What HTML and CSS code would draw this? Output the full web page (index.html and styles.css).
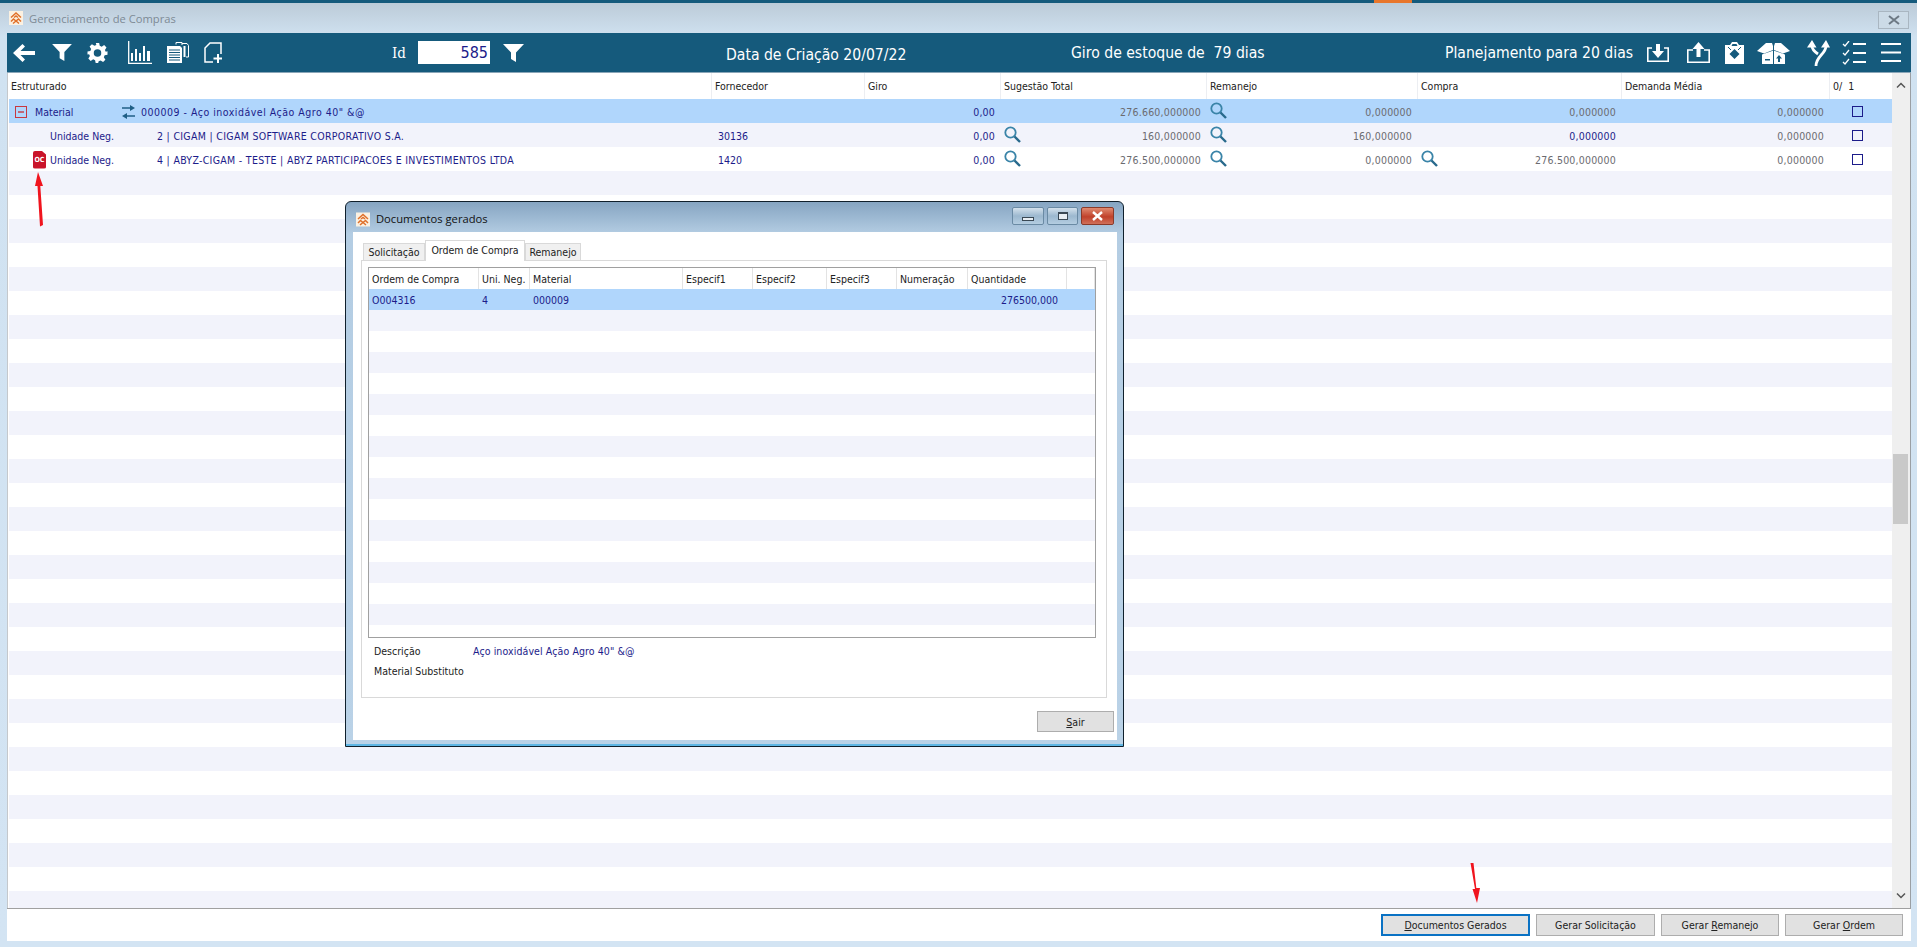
FILE: index.html
```html
<!DOCTYPE html>
<html lang="pt-BR">
<head>
<meta charset="utf-8">
<title>Gerenciamento de Compras</title>
<link rel="stylesheet" href="styles.css">
</head>
<body>
<svg class="defs" width="0" height="0" aria-hidden="true">
  <symbol id="logo" viewBox="0 0 14 14"><rect width="14" height="14" fill="#fbf1e2"/><path d="M2 6.500l5-4.500 5 4.500M2 10.500l2.500-2.500L7 10l2.500-2L12 10.500M4 12.500L7 10l3 2.500M5 6.500L7 5l2 1.500" fill="none" stroke="#e0702a" stroke-width="1.500"/></symbol>
  <symbol id="funnel" viewBox="0 0 21 18"><path d="M0 0h21l-8 8.500V18l-5-3V8.500z" fill="#fff"/></symbol>
  <symbol id="mag" viewBox="0 0 17 17"><circle cx="6.500" cy="6.500" r="5.200" fill="none" stroke="#3a84a8" stroke-width="1.800"/><path d="M10.500 10.500l5.500 5.500" stroke="#28698c" stroke-width="2.400"/></symbol>
</svg>

<div class="topbar"><span class="task-tab"></span></div>

<main class="window">
  <header class="titlebar">
    <svg class="logo"><use href="#logo"/></svg>
    <span class="title-text">Gerenciamento de Compras</span>
    <span class="win-close"><svg width="14" height="10" viewBox="0 0 14 10"><path d="M2 1l10 8M12 1L2 9" stroke="#6d7984" stroke-width="2"/></svg></span>
  </header>

  <div class="toolbar">
    <div class="tool-group tool-left">
      <svg width="22" height="18" viewBox="0 0 22 18"><path d="M9.500 0l2.500 2.500L7.500 7H22v4H7.500l4.500 4.500L9.500 18 0 9z" fill="#fff"/></svg>
      <svg width="20" height="17"><use href="#funnel"/></svg>
      <svg width="21" height="20" viewBox="0 0 24 24"><path fill="#fff" fill-rule="evenodd" d="M10 0h4l.7 3.400 2.300 1 3-1.900 2.800 2.800-1.900 3 1 2.300L24 10v4l-3.400.7-1 2.300 1.900 3-2.800 2.800-3-1.900-2.300 1L12.800 24h-3l-.7-3.400-2.300-1-3 1.900-2.800-2.800 1.900-3-1-2.300L0 13.800v-3.600l3.400-.7 1-2.300-1.900-3 2.800-2.800 3 1.900 2.300-1zM12 7.500a4.500 4.500 0 100 9 4.500 4.500 0 000-9z"/></svg>
      <svg width="24" height="23" viewBox="0 0 24 23"><path fill="none" stroke="#fff" stroke-width="1.300" d="M.7 0v22.300H24"/><path fill="#fff" d="M3 12h2v8H3zM7 8h2v12H7zM11 12h2v8h-2zM15 5h2v15h-2zM19 10h3v10h-3z"/></svg>
      <svg width="22" height="21" viewBox="0 0 22 21"><path fill="none" stroke="#fff" d="M9 2.500V.5h6V3M15 1.500h5l1.500 2V15H19"/><path fill="#fff" d="M0 4h13l2 2v15H0z"/><path stroke="#155a7c" d="M2 8h11M2 10.500h11M2 13h11M2 15.500h11M2 18h11"/><path fill="#fff" d="M16.500 4h2v11h-2z"/></svg>
      <svg width="18" height="21" viewBox="0 0 18 21"><path fill="none" stroke="#fff" stroke-width="1.500" d="M17 12V1H6L1 6v14h8"/><path stroke="#fff" stroke-width="2" d="M14 12v9M9.500 16.500h8.500"/></svg>
    </div>
    <div class="id-box">
      <span class="id-label">Id</span>
      <span class="id-input">585</span>
      <svg width="21" height="18"><use href="#funnel"/></svg>
    </div>
    <span class="tool-text tool-date">Data de Criação 20/07/22</span>
    <span class="tool-text tool-giro">Giro de estoque de &nbsp;79 dias</span>
    <span class="tool-text tool-plan">Planejamento para 20 dias</span>
    <div class="tool-group tool-right">
      <svg width="22" height="18" viewBox="0 0 22 18"><path fill="none" stroke="#fff" stroke-width="1.600" d="M5 4H.8v13.200h20.400V4H17"/><path fill="#fff" d="M9 0h4v7h4l-6 7-6-7h4z"/></svg>
      <svg width="23" height="21" viewBox="0 0 23 21"><path fill="none" stroke="#fff" stroke-width="1.600" d="M6 8H.8v12.200h21.400V8H17"/><path fill="#fff" d="M11.500 0l6 7h-4v8h-4V7h-4z"/></svg>
      <svg width="19" height="22" viewBox="0 0 19 22"><path fill="#fff" d="M0 3h5l2-3h5l2 3h5v19H0z"/><path fill="#155a7c" d="M7.500 2h4l1 2h-6zM9.500 7l5 5-5 5-5-5z"/><path fill="none" stroke="#155a7c" d="M3 5l3 3M16 5l-3 3"/></svg>
      <svg width="33" height="22" viewBox="0 0 33 22"><path fill="#fff" d="M0 9L9 1h6l1 3v4L7 11.500zM33 9l-9-8h-6l-1 3v4l9 3.500zM5 12.500l11.500-4 11.500 4V22H5z"/><path stroke="#155a7c" stroke-width="1" d="M16.500 8v14"/><path fill="#155a7c" d="M8 17h5v1.500H8zM22 13l3 3.500h-2V20h-2v-3.500h-2z"/></svg>
      <svg width="23" height="26" viewBox="0 0 23 26"><path fill="none" stroke="#fff" stroke-width="2.800" d="M9 26c0-10 10-12 10-20M5 6c0 4 3 6 6 8"/><path fill="#fff" d="M0 7.500L5 0l4.500 7.500zM14 7.500L19 0l4 7.500z"/></svg>
      <svg width="24" height="24" viewBox="0 0 24 24"><path stroke="#fff" stroke-width="2.200" d="M11 3h13M11 12h13M11 21h13"/><path fill="none" stroke="#fff" stroke-width="1.300" d="M1 3l2 2 4-5M1 12l2 2 4-5M1 21l2 2 4-5"/></svg>
      <svg width="20" height="19" viewBox="0 0 20 19"><path stroke="#fff" stroke-width="2" d="M0 1h20M0 9.500h20M0 18h20"/></svg>
    </div>
  </div>

  <section class="grid">
    <div class="grid-main">
      <div class="row head-row">
        <span class="c c1">Estruturado</span><span class="c c2">Fornecedor</span><span class="c c3">Giro</span><span class="c c4">Sugestão Total</span><span class="c c5">Remanejo</span><span class="c c6">Compra</span><span class="c c7">Demanda Média</span><span class="c c8">0/ &nbsp;1</span>
      </div>
      <div class="row row-sel">
        <span class="c c1">
          <svg class="tree-minus" width="12" height="12" viewBox="0 0 12 12"><rect x=".5" y=".5" width="11" height="11" fill="none" stroke="#c8383f"/><path d="M3 6h6" stroke="#c8383f" stroke-width="1.400"/></svg>
          <span class="lab-material">Material</span>
          <svg class="swap" width="13" height="14" viewBox="0 0 13 14"><path fill="#1f5f86" d="M0 2.300h8V0l5 3-5 3V3.700H0zM13 10.300H5V8L0 11l5 3v-2.300h8z"/></svg>
          <span class="val-material">000009 - Aço inoxidável Ação Agro 40" &amp;@</span>
        </span>
        <span class="c c2"></span>
        <span class="c c3 num">0,00</span>
        <span class="c c4 num grey">276.660,000000</span>
        <span class="c c5 num grey"><svg class="mag"><use href="#mag"/></svg>0,000000</span>
        <span class="c c6 num grey">0,000000</span>
        <span class="c c7 num grey">0,000000</span>
        <span class="c c8"><i class="check"></i></span>
      </div>
      <div class="row row-alt">
        <span class="c c1"><span class="lab-unit">Unidade Neg.</span><span class="val-unit">2 | CIGAM | CIGAM SOFTWARE CORPORATIVO S.A.</span></span>
        <span class="c c2 code">30136</span>
        <span class="c c3 num">0,00</span>
        <span class="c c4 num grey"><svg class="mag"><use href="#mag"/></svg>160,000000</span>
        <span class="c c5 num grey"><svg class="mag"><use href="#mag"/></svg>160,000000</span>
        <span class="c c6 num">0,000000</span>
        <span class="c c7 num grey">0,000000</span>
        <span class="c c8"><i class="check"></i></span>
      </div>
      <div class="row">
        <span class="c c1">
          <span class="oc-badge">OC</span>
          <span class="lab-unit lab-unit-oc">Unidade Neg.</span><span class="val-unit">4 | ABYZ-CIGAM - TESTE | ABYZ PARTICIPACOES E INVESTIMENTOS LTDA</span>
        </span>
        <span class="c c2 code">1420</span>
        <span class="c c3 num">0,00</span>
        <span class="c c4 num grey"><svg class="mag"><use href="#mag"/></svg>276.500,000000</span>
        <span class="c c5 num grey"><svg class="mag"><use href="#mag"/></svg>0,000000</span>
        <span class="c c6 num grey"><svg class="mag"><use href="#mag"/></svg>276.500,000000</span>
        <span class="c c7 num grey">0,000000</span>
        <span class="c c8"><i class="check"></i></span>
      </div>
      <div class="empty-rows"></div>
    </div>
    <div class="scrollbar">
      <svg class="sb-arrow" width="10" height="7" viewBox="0 0 10 7"><path d="M1 5.500l4-4 4 4" fill="none" stroke="#555" stroke-width="1.500"/></svg>
      <span class="sb-thumb"></span>
      <svg class="sb-arrow" width="10" height="7" viewBox="0 0 10 7"><path d="M1 1.500l4 4 4-4" fill="none" stroke="#555" stroke-width="1.500"/></svg>
    </div>
  </section>

  <footer class="footer">
    <button class="btn btn-focus w1"><u>D</u>ocumentos Gerados</button>
    <button class="btn w2">Gerar Solicitação</button>
    <button class="btn w3">Gerar <u>R</u>emanejo</button>
    <button class="btn w3">Gerar <u>O</u>rdem</button>
  </footer>
</main>

<svg class="arrow arrow-up" width="12" height="56" viewBox="0 0 12 56"><path d="M6 0l5 14H8.300L11 53l-3 1.500L5.500 14H3z" fill="#f0141e"/></svg>
<svg class="arrow arrow-down" width="12" height="42" viewBox="0 0 12 42"><path d="M.5 0h3l2.800 25H10L7 40 2.500 26H5z" fill="#f0141e"/></svg>

<section class="dialog">
  <header class="dlg-title">
    <svg class="logo"><use href="#logo"/></svg>
    <span class="dlg-title-text">Documentos gerados</span>
    <span class="cap cap-w1"><i class="cap-min"></i></span>
    <span class="cap cap-w2"><i class="cap-max"></i></span>
    <span class="cap cap-close"><svg width="13" height="10" viewBox="0 0 13 10"><path d="M2 1l9 8M11 1L2 9" stroke="#fff" stroke-width="2.400"/></svg></span>
  </header>
  <div class="dlg-client">
    <div class="tabs">
      <span class="tab t1">Solicitação</span>
      <span class="tab tab-on">Ordem de Compra</span>
      <span class="tab t3">Remanejo</span>
    </div>
    <div class="panel">
      <div class="dgrid">
        <div class="drow dhead">
          <span class="d d1">Ordem de Compra</span><span class="d d2">Uni. Neg.</span><span class="d d3">Material</span><span class="d d4">Especif1</span><span class="d d5">Especif2</span><span class="d d6">Especif3</span><span class="d d7">Numeração</span><span class="d d8">Quantidade</span><span class="d d9"></span>
        </div>
        <div class="drow dsel">
          <span class="d d1">O004316</span><span class="d d2">4</span><span class="d d3">000009</span><span class="d d4"></span><span class="d d5"></span><span class="d d6"></span><span class="d d7"></span><span class="d d8 dnum">276500,000</span><span class="d d9"></span>
        </div>
        <div class="dempty"></div>
      </div>
      <div class="meta">
        <span class="meta-k">Descrição</span><span class="meta-v">Aço inoxidável Ação Agro 40" &amp;@</span>
      </div>
      <div class="meta meta2">
        <span class="meta-k">Material Substituto</span>
      </div>
    </div>
    <div class="dlg-foot"><button class="btn btn-sair"><u>S</u>air</button></div>
  </div>
</section>
</body>
</html>
```
FILE: styles.css
```css
* { box-sizing: border-box; }
html, body { margin: 0; height: 100%; }
body {
  width: 1917px; height: 947px; overflow: hidden; position: relative;
  display: flex; flex-direction: column;
  font-family: "DejaVu Sans", "Liberation Sans", sans-serif;
  font-stretch: condensed;
  font-size: 10.5px; color: #1c1c8a; background: #d6e5f2;
}
.defs { position: absolute; }
svg { display: block; flex: none; }
.topbar { height: 3px; background: #155a7c; flex: none; display: flex; }
.task-tab { margin-left: 1374px; width: 38px; background: #e8762c; }
.window { flex: 1; display: flex; flex-direction: column; padding: 0 6px 6px 7px; min-height: 0;
  background: linear-gradient(#bccbd8 0, #d0e2f1 34px, #d3e4f3 100%); }
.titlebar { height: 30px; flex: none; display: flex; align-items: center; position: relative; margin-left: 2px; }
.logo { width: 14px; height: 14px; }
.title-text { font-family: "Open Sans", sans-serif; font-stretch: normal; font-size: 11.200px; color: #7d8a95; margin-left: 6px; }
.win-close { margin-left: auto; margin-right: 2px; margin-top: 3px; width: 31px; height: 18px; border: 1px solid #a9b6c1; background: #ccdbe7; display: flex; align-items: center; justify-content: center; }

.toolbar { height: 40px; flex: none; background: #155a7c; border-bottom: 1px solid #8aa6b8; display: flex; align-items: center; color: #fff; position: relative; }
.tool-group { display: flex; align-items: center; }
.tool-left { margin-left: 6px; gap: 17px; width: 311px; }
.tool-left svg:nth-child(3) { margin-left: -2px; }
.tool-left svg:nth-child(4) { margin-left: 3px; }
.tool-left svg:nth-child(5) { margin-left: -2px; }
.tool-left svg:nth-child(6) { margin-left: -2px; }
.id-box { display: flex; align-items: center; margin-left: 68px; }
.id-label { font-family: "DejaVu Serif", serif; font-stretch: condensed; font-size: 15px; width: 26px; }
.id-input { width: 72px; height: 23px; background: #fff; color: #1c1c8a; font-size: 16px; text-align: right; line-height: 23px; padding-right: 2px; margin-right: 13px; }
.tool-text { font-size: 15.600px; white-space: nowrap; padding-top: 1px; }
.tool-date { margin-left: 202px; width: 345px; padding-top: 5px; }
.tool-giro { width: 374px; }
.tool-plan { width: 202px; }
.tool-right { gap: 18px; }
.tool-right svg:nth-child(3) { margin-left: -3px; }
.tool-right svg:nth-child(4) { margin-left: -5px; }
.tool-right svg:nth-child(5) { margin-left: -1px; }
.tool-right svg:nth-child(6) { margin-left: -6px; }
.tool-right svg:nth-child(7) { margin-left: -3px; }

.grid { flex: 1; min-height: 0; display: flex; background: #fff; }
.grid-main { flex: 1; display: flex; flex-direction: column; padding-left: 1px; border-left: 1px solid #c4c8cc; min-width: 0; }
.row { height: 24px; flex: none; display: grid; grid-template-columns: 702px 153px 136px 206px 211px 204px 208px 63px; align-items: center; background: #fff; padding-top: 1px; }
.head-row { height: 26px; color: #222; padding-top: 0; }
.head-row .c { height: 100%; display: flex; align-items: center; padding-left: 3px; border-left: 1px solid #eceef2; }
.head-row .c1 { border-left: 0; padding-left: 2px; }
.row-sel { background: #b0d6fc; }
.row-alt { background: #f2f3fb; }
.c { white-space: nowrap; position: relative; display: flex; align-items: center; height: 100%; }
.num { justify-content: flex-end; padding-right: 5px; letter-spacing: .2px; }
.grey { color: #6b6b70; }
.c2.code { padding-left: 7px; }
.mag { width: 17px; height: 17px; position: absolute; left: 4px; top: 2px; }
.tree-minus { margin-left: 6px; }
.lab-material { margin-left: 8px; width: 87px; }
.swap { margin-right: 6px; }
.val-material { letter-spacing: .5px; }
.lab-unit { margin-left: 41px; width: 107px; }
.val-unit { letter-spacing: .3px; }
.lab-unit-oc { margin-left: 4px; }
.oc-badge { margin-left: 24px; width: 13px; height: 18px; background: #c9142a; color: #fff; font-size: 7px; font-weight: 700; font-stretch: condensed; border-radius: 2px; clip-path: polygon(0 0, 65% 0, 100% 22%, 100% 100%, 0 100%); display: flex; align-items: center; justify-content: center; }
.check { margin-left: 23px; width: 11px; height: 11px; border: 1px solid #1c1c8a; display: block; }
.empty-rows { flex: 1; background: repeating-linear-gradient(#f2f3fb 0 24px, #fff 24px 48px); }
.scrollbar { width: 19px; flex: none; background: #efefef; border-right: 1px solid #9a9fa4; display: flex; flex-direction: column; align-items: center; position: relative; justify-content: space-between; padding: 9px 0; }
.sb-thumb { position: absolute; top: 381px; left: 1px; width: 15px; height: 70px; background: #c9c9c9; }

.footer { height: 33px; flex: none; background: #fff; border-top: 1px solid #a0a0a0; display: flex; align-items: flex-start; justify-content: flex-end; gap: 6px; padding: 5px 8px 0 0; }
.btn { font-family: inherit; font-stretch: condensed; font-size: 10.500px; color: #222; height: 22px; background: #e1e1e1; border: 1px solid #adadad; padding: 0; border-radius: 0; }
.btn-focus { border: 2px solid #0a72c4; }
.w1 { width: 149px; }
.w2 { width: 119px; }
.w3 { width: 118px; }

.arrow { position: absolute; }
.arrow-up { left: 32px; top: 172px; }
.arrow-down { left: 1470px; top: 863px; }

.dialog { position: absolute; left: 345px; top: 201px; width: 779px; height: 546px; border: 1px solid #10202c; border-radius: 6px 6px 0 0; background: linear-gradient(#86a5c2 0, #b4cde3 32px, #bad2e7 100%); padding: 0 6px 6px 7px; display: flex; flex-direction: column; box-shadow: inset 0 -2px 0 #5fb6e4; }
.dlg-title { height: 30px; flex: none; display: flex; align-items: center; gap: 3px; }
.dlg-title .logo { margin: 4px 0 0 3px; width: 14px; height: 15px; }
.dlg-title-text { font-family: "Open Sans", sans-serif; font-stretch: normal; font-size: 11.200px; color: #111; margin: 3px auto 0 3px; }
.cap { height: 18px; border: 1px solid #6a8aa4; border-radius: 2px; background: linear-gradient(#d4e1ec, #9cb8cf 50%, #b4cde1); display: flex; align-items: center; justify-content: center; margin-top: -2px; }
.cap-w1 { width: 32px; }
.cap-w2 { width: 31px; }
.cap-close { width: 33px; background: linear-gradient(#e08a70, #c0412b 55%, #d0705a); border-color: #8a3a2a; margin-right: 3px; }
.cap-min { width: 12px; height: 4px; border: 1px solid #3a4854; background: #e8eef3; margin-top: 5px; }
.cap-max { width: 10px; height: 8px; border: 1px solid #3a4854; border-top-width: 2px; background: #e8eef3; }
.dlg-client { flex: 1; background: #fff; display: flex; flex-direction: column; padding: 8px 10px 0 8px; min-height: 0; font-family: "DejaVu Sans", sans-serif; }
.tabs { height: 21px; flex: none; display: flex; align-items: flex-end; color: #222; font-size: 10.5px; position: relative; z-index: 1; margin-bottom: -1px; }
.tab { height: 17px; display: flex; align-items: center; justify-content: center; background: #f0f0f0; border: 1px solid #d9d9d9; border-bottom: 0; margin-bottom: 1px; }
.t1 { width: 62px; margin-left: 2px; }
.t3 { width: 56px; }
.tab-on { width: 100px; height: 21px; background: #fff; margin-bottom: 0; padding-bottom: 3px; }
.panel { height: 438px; flex: none; border: 1px solid #d9d9d9; padding: 6px 10px 0 6px; display: flex; flex-direction: column; }
.dgrid { height: 371px; flex: none; border: 1px solid #a0a0a0; display: flex; flex-direction: column; background: #fff; }
.drow { display: grid; grid-template-columns: 110px 51px 153px 70px 74px 70px 71px 99px 28px; align-items: center; flex: none; }
.dhead { height: 21px; color: #222; font-size: 10.5px; }
.dhead .d { border-right: 1px solid #e3e3e3; height: 100%; display: flex; align-items: center; padding-left: 3px; }
.dsel { height: 21px; background: #b0d6fc; }
.d { white-space: nowrap; padding-left: 3px; }
.dnum { text-align: right; padding: 0 9px 0 0; }
.dempty { height: 315px; flex: none; background: repeating-linear-gradient(#f2f3fb 0 21px, #fff 21px 42px); }
.meta { height: 20px; flex: none; display: flex; align-items: center; margin-top: 3px; padding-left: 6px; }
.meta2 { margin-top: 0; }
.meta-k { color: #222; width: 99px; }
.meta-v { letter-spacing: .1px; }
.dlg-foot { flex: 1; display: flex; justify-content: flex-end; padding: 13px 0 0; margin-right: -7px; }
.btn-sair { width: 77px; height: 21px; }
```
